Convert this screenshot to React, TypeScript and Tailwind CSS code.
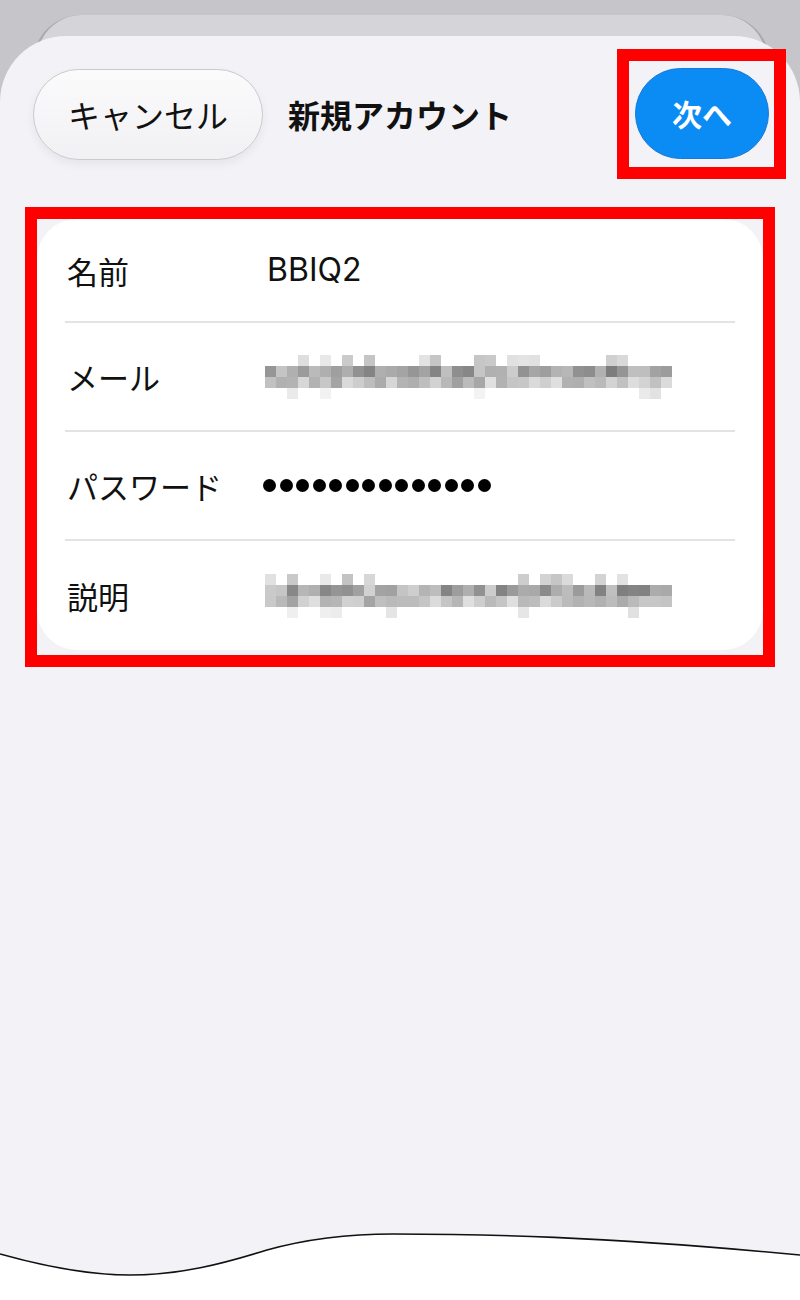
import React from 'react'

const jp = { fontFamily: '"Noto Sans CJK JP", "Noto Sans", sans-serif' }
const latin = { fontFamily: 'Inter, "Noto Sans CJK JP", sans-serif' }

// pixelated redaction, drawn as a grid of grey squares
function Mosaic({ seed, cols = 37 }: { seed: number; cols?: number }) {
  let s = seed
  const rand = () => {
    s = (s * 1103515245 + 12345) % 2147483648
    return s / 2147483648
  }
  const cell = 11
  const rows = 4
  const rects: React.ReactElement[] = []
  for (let r = 0; r < rows; r++) {
    for (let c = 0; c < cols; c++) {
      const v = rand()
      let g = 255
      if (r === 1) {
        g = Math.round(125 + v * 85)
      } else if (r === 2) {
        g = Math.round(160 + v * 65)
      } else if (r === 0 && v > 0.7) {
        g = Math.round(195 + rand() * 40)
      } else if (r === 3 && v > 0.85) {
        g = Math.round(225 + rand() * 20)
      }
      if (g >= 250) continue
      rects.push(
        <rect key={`${r}-${c}`} x={c * cell} y={r * cell} width={cell} height={cell} fill={`rgb(${g},${g},${g})`} />
      )
    }
  }
  return (
    <svg width={cols * cell} height={rows * cell} viewBox={`0 0 ${cols * cell} ${rows * cell}`} shapeRendering="crispEdges">
      {rects}
    </svg>
  )
}

function Row({ label, children, h, last }: { label: string; children: React.ReactNode; h: string; last?: boolean }) {
  return (
    <div className={`flex items-center ${h} ${last ? '' : 'border-b-2 border-[#e3e3e6]'}`}>
      <div className="w-[200px] pl-[2px] text-[31px] leading-none text-[#111]" style={jp}>
        {label}
      </div>
      <div className="flex flex-1 items-center">{children}</div>
    </div>
  )
}

export default function App() {
  return (
    <div className="relative h-[1300px] w-[800px] overflow-hidden bg-[#c5c5ca]">
      {/* stacked sheet behind */}
      <div className="absolute left-[33px] right-[30px] top-[15px] h-[120px] rounded-t-[48px] border-x-[3px] border-[#a9a9ae] bg-[#d4d4d9]" />

      <div className="relative mt-[36px] flex h-[1184px] flex-col rounded-t-[66px] bg-[#f2f2f7] pt-[13px]">
        <div className="flex items-center pl-[33px] pr-[14px]">
          <button
            className="flex h-[91px] w-[230px] items-center justify-center rounded-full border border-[#c9c9ce] bg-gradient-to-b from-[#fbfbfc] to-[#f1f1f4] text-[32px] text-[#111] shadow-[0_4px_10px_rgba(0,0,0,0.06)]"
            style={jp}
          >
            キャンセル
          </button>
          <div className="ml-[25px] text-[32px] font-bold text-[#111]" style={jp}>
            新規アカウント
          </div>
          <div className="ml-auto border-[12px] border-[#ff0000] pb-[8px] pl-[6px] pr-[5px] pt-[7px]">
            <button
              className="flex h-[91px] w-[134px] items-center justify-center rounded-full border border-[#1a78d8] bg-[#0b8cf4] text-[30px] font-bold text-white"
              style={jp}
            >
              次へ
            </button>
          </div>
        </div>

        <div className="mx-[25px] mt-[28px] border-[12px] border-[#ff0000] pb-[5px]">
          <div className="rounded-[40px] bg-white px-[28px]">
            <Row label="名前" h="h-[104px]">
              <span className="ml-[2px] text-[32px] leading-none text-[#111]" style={latin}>
                BBIQ2
              </span>
            </Row>
            <Row label="メール" h="h-[109px]">
              <Mosaic seed={7} />
            </Row>
            <Row label="パスワード" h="h-[109px]">
              <div className="-ml-[2px] flex gap-[3.5px]">
                {Array.from({ length: 14 }).map((_, i) => (
                  <span key={i} className="h-[13px] w-[13px] rounded-full bg-black" />
                ))}
              </div>
            </Row>
            <Row label="説明" h="h-[109px]" last>
              <Mosaic seed={29} />
            </Row>
          </div>
        </div>
      </div>

      <svg width="800" height="80" viewBox="0 0 800 80" className="block bg-white">
        <path
          d="M0,0 L0,34 C50,48 90,55 130,55 C180,55 222,44 267,30 C310,18 350,14 393,14 C480,14 600,16 800,35 L800,0 Z"
          fill="#f2f2f7"
        />
        <path
          d="M0,34 C50,48 90,55 130,55 C180,55 222,44 267,30 C310,18 350,14 393,14 C480,14 600,16 800,35"
          fill="none"
          stroke="#111"
          strokeWidth="1.6"
        />
      </svg>
    </div>
  )
}
